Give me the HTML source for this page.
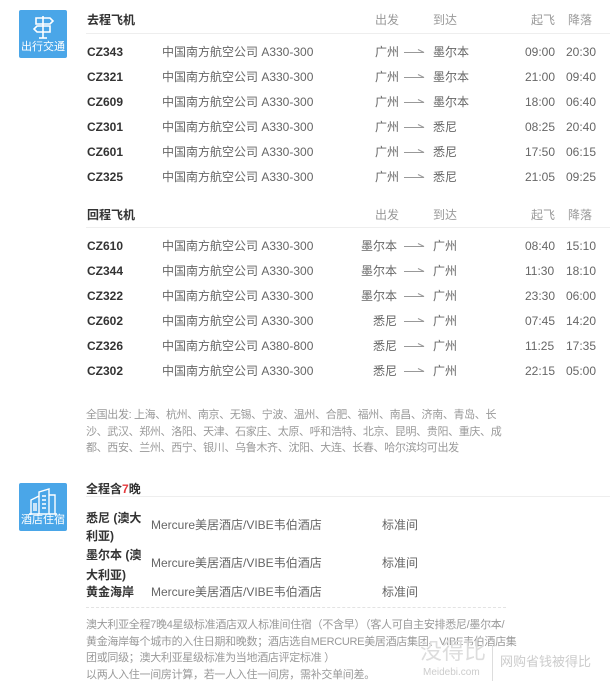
<!DOCTYPE html>
<html><head><meta charset="utf-8"><style>
body{margin:0;width:610px;height:693px;background:#fff;position:relative;overflow:hidden;font-family:"Liberation Sans","Noto Sans CJK SC",sans-serif;font-size:12px;color:#666}
.a{position:absolute;white-space:nowrap;line-height:16px}
.b{font-weight:bold;color:#333}
.h{color:#999}
.ic{position:absolute;left:19px;width:48px;height:48px;background:#4aa6e8;border-radius:2px;color:#fff;font-size:11px;text-align:center}
.ic span{position:absolute;left:0;right:0;bottom:4px;line-height:13px}
.line{position:absolute;left:86px;right:0;height:1px;background:#eee}
</style></head><body>
<div class="ic" style="top:10px"><svg width="48" height="34" viewBox="0 0 48 34"><g fill="none" stroke="#fff" stroke-width="1.6"><path d="M24 6v22M17 8h14l3 3-3 3H17zM31 16H18l-3 3 3 3h13z"/><path d="M20 28h8"/></g></svg><span>出行交通</span></div>
<div class="ic" style="top:483px"><svg width="48" height="34" viewBox="0 0 48 34"><g fill="none" stroke="#fff" stroke-width="1.4"><path d="M12 31V17l8-4v18M20 31V9l10-3v25M30 12h6v19M10 31h28"/><path d="M23 13h4M23 17h4M23 21h4M23 25h4M15 20v8M17 20v8"/></g></svg><span>酒店住宿</span></div>
<div class="line" style="top:33px"></div>
<div class="line" style="top:227px"></div>
<div class="line" style="top:496px"></div>
<div style="position:absolute;left:86px;width:420px;top:607px;border-top:1px dashed #e3e3e3"></div>
<div id="c"></div>
<script>
var c=document.getElementById('c'),h='';
function t(x,y,s,cl){h+='<div class="a '+(cl||'')+'" style="left:'+x+'px;top:'+(y-8)+'px">'+s+'</div>';}
function hdr(y,title){t(87,y,title,'b');t(375,y,'出发','h');t(433,y,'到达','h');t(531,y,'起飞','h');t(568,y,'降落','h');}
var arr='<svg width="22" height="6"><path d="M0 4.5h20l-6-3" fill="none" stroke="#999" stroke-width="1"/></svg>';
function row(y,code,plane,f,to,d,l,ret){t(87,y,code,'b');t(162,y,'中国南方航空公司 '+plane);
 if(ret){h+='<div class="a" style="right:'+(610-397)+'px;top:'+(y-8)+'px">'+f+'</div>';}else t(375,y,f);
 h+='<div style="position:absolute;left:404px;top:'+(y-4)+'px;line-height:0">'+arr+'</div>';t(433,y,to);t(525,y,d);t(566,y,l);}
hdr(20,'去程飞机');
var g=[['CZ343','A330-300','墨尔本','09:00','20:30'],['CZ321','A330-300','墨尔本','21:00','09:40'],['CZ609','A330-300','墨尔本','18:00','06:40'],['CZ301','A330-300','悉尼','08:25','20:40'],['CZ601','A330-300','悉尼','17:50','06:15'],['CZ325','A330-300','悉尼','21:05','09:25']];
g.forEach(function(r,i){row(52+25*i,r[0],r[1],'广州',r[2],r[3],r[4]);});
hdr(215,'回程飞机');
var b=[['CZ610','A330-300','墨尔本','08:40','15:10'],['CZ344','A330-300','墨尔本','11:30','18:10'],['CZ322','A330-300','墨尔本','23:30','06:00'],['CZ602','A330-300','悉尼','07:45','14:20'],['CZ326','A380-800','悉尼','11:25','17:35'],['CZ302','A330-300','悉尼','22:15','05:00']];
b.forEach(function(r,i){row(246+25*i,r[0],r[1],r[2],'广州',r[3],r[4],1);});
c.innerHTML=h;
</script>
<div class="a" style="left:86px;top:407px;line-height:16.5px;color:#999;font-size:11px;letter-spacing:-0.35px">全国出发: 上海、杭州、南京、无锡、宁波、温州、合肥、福州、南昌、济南、青岛、长<br>沙、武汉、郑州、洛阳、天津、石家庄、太原、呼和浩特、北京、昆明、贵阳、重庆、成<br>都、西安、兰州、西宁、银川、乌鲁木齐、沈阳、大连、长春、哈尔滨均可出发</div>
<div class="a b" style="left:86px;top:481px">全程含<span style="color:#e4393c">7</span>晚</div>
<div class="a b" style="left:86px;top:509px;width:66px;white-space:normal;line-height:18px">悉尼 (澳大利亚)</div>
<div class="a" style="left:151px;top:517px">Mercure美居酒店/VIBE韦伯酒店</div><div class="a" style="left:382px;top:517px">标准间</div>
<div class="a b" style="left:86px;top:545px;width:66px;white-space:normal;line-height:20px">墨尔本 (澳大利亚)</div>
<div class="a" style="left:151px;top:555px">Mercure美居酒店/VIBE韦伯酒店</div><div class="a" style="left:382px;top:555px">标准间</div>
<div class="a b" style="left:86px;top:584px">黄金海岸</div>
<div class="a" style="left:151px;top:584px">Mercure美居酒店/VIBE韦伯酒店</div><div class="a" style="left:382px;top:584px">标准间</div>
<div class="a" style="left:86px;top:617px;line-height:16.5px;color:#999;font-size:11px;letter-spacing:-0.3px">澳大利亚全程7晚4星级标准酒店双人标准间住宿（不含早）（客人可自主安排悉尼/墨尔本/<br>黄金海岸每个城市的入住日期和晚数；酒店选自MERCURE美居酒店集团、VIBE韦伯酒店集<br>团或同级；澳大利亚星级标准为当地酒店评定标准 ）<br>以两人入住一间房计算，若一人入住一间房，需补交单间差。</div>
<div class="a" style="left:420px;top:640px;font-size:22px;line-height:24px;color:#ddd">没得比</div>
<div class="a" style="left:423px;top:665px;font-size:10px;color:#ccc">Meidebi.com</div>
<div style="position:absolute;left:492px;top:645px;width:1px;height:36px;background:#ddd"></div>
<div class="a" style="left:500px;top:654px;font-size:13px;color:#ccc">网购省钱被得比</div>
</body></html>
